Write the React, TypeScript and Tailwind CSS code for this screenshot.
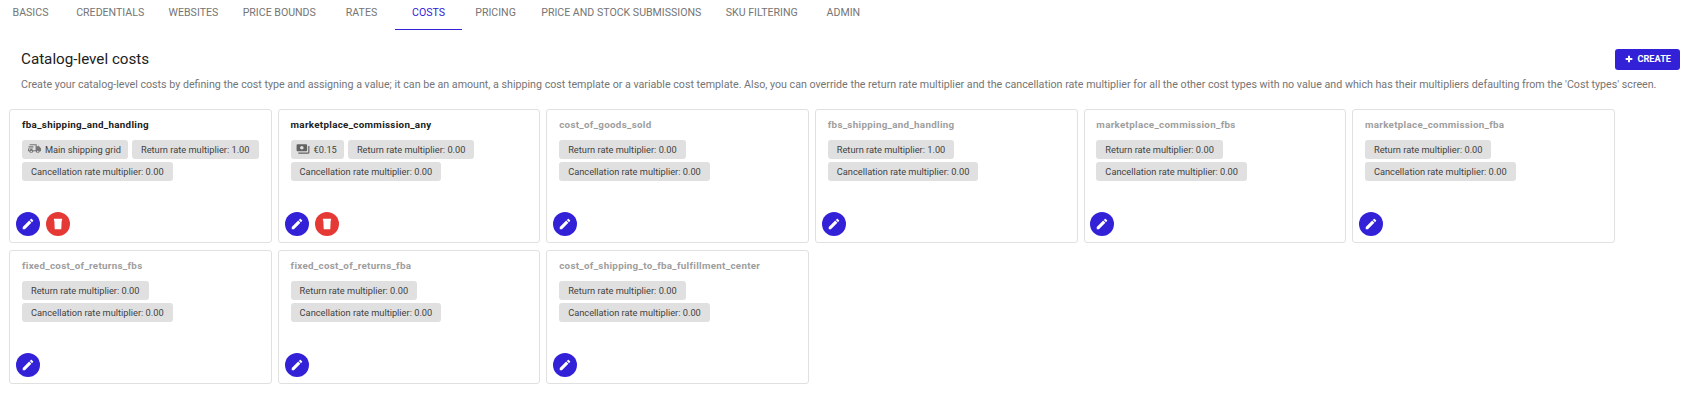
const tabs = [
  "Basics",
  "Credentials",
  "Websites",
  "Price bounds",
  "Rates",
  "Costs",
  "Pricing",
  "Price and stock submissions",
  "SKU filtering",
  "Admin",
];

type Cost = {
  name: string;
  active?: boolean;
  value?: { kind: "truck" | "money"; label: string };
  ret: string;
};

const costs: Cost[] = [
  { name: "fba_shipping_and_handling", active: true, value: { kind: "truck", label: "Main shipping grid" }, ret: "1.00" },
  { name: "marketplace_commission_any", active: true, value: { kind: "money", label: "€0.15" }, ret: "0.00" },
  { name: "cost_of_goods_sold", ret: "0.00" },
  { name: "fbs_shipping_and_handling", ret: "1.00" },
  { name: "marketplace_commission_fbs", ret: "0.00" },
  { name: "marketplace_commission_fba", ret: "0.00" },
  { name: "fixed_cost_of_returns_fbs", ret: "0.00" },
  { name: "fixed_cost_of_returns_fba", ret: "0.00" },
  { name: "cost_of_shipping_to_fba_fulfillment_center", ret: "0.00" },
];

function TruckIcon() {
  return (
    <svg className="w-[13px] h-[13px] -ml-[3px] -translate-y-[1px] text-[#757575]" viewBox="0 0 24 24" fill="currentColor">
      <path d="M19 8h-3V4H3v2h11v9H9.2c-.5-1.2-1.700-2-3.200-2s-2.700.8-3.200 2H2v-3H0v5h2.300c.3 1.700 1.800 3 3.700 3s3.400-1.300 3.700-3h4.600c.3 1.700 1.800 3 3.700 3s3.400-1.300 3.700-3H24v-5l-5-6zM6 19c-.8 0-1.500-.7-1.500-1.500S5.200 16 6 16s1.500.7 1.500 1.500S6.800 19 6 19zm12 0c-.8 0-1.500-.7-1.500-1.500S17.200 16 18 16s1.500.7 1.500 1.500S18.800 19 18 19zM1 8h9v2H1zM2 11h7v1H2z" />
    </svg>
  );
}

function MoneyIcon() {
  return (
    <svg className="w-[14px] h-[14px] -ml-[4px] -translate-y-[1px] text-[#616161]" viewBox="0 0 24 24" fill="currentColor">
      <path d="M19 14V6c0-1.100-.9-2-2-2H3c-1.100 0-2 .9-2 2v8c0 1.100.9 2 2 2h14c1.100 0 2-.9 2-2zm-9-1c-1.660 0-3-1.340-3-3s1.340-3 3-3 3 1.340 3 3-1.340 3-3 3zm13-6v11c0 1.100-.9 2-2 2H4v-2h17V7h2z" />
    </svg>
  );
}

function Chip({ children }: { children: React.ReactNode }) {
  return (
    <div className="flex items-center h-[19px] px-[9px] rounded-[3px] bg-[#e0e0e0] text-[9.25px] text-[#424242] whitespace-nowrap">
      {children}
    </div>
  );
}

function CostCard({ cost }: { cost: Cost }) {
  return (
    <div className="flex flex-col w-[262.600px] h-[134px] rounded-[3px] border border-[#e0e0e0] bg-white pl-[5.7px] pb-[6.500px]">
      <div className={`pl-[6px] pt-[8px] text-[9.800px] font-bold tracking-[0.3px] leading-[14px] ${cost.active ? "text-[#212121]" : "text-[#9e9e9e]"}`}>
        {cost.name}
      </div>
      <div className="flex flex-wrap gap-x-[3.6px] gap-y-[3px] pl-[6px] pt-[8px]">
        {cost.value && (
          <Chip>
            {cost.value.kind === "truck" ? <TruckIcon /> : <MoneyIcon />}
            <span className="ml-[4px] -mr-[1.500px]">{cost.value.label}</span>
          </Chip>
        )}
        <Chip>Return rate multiplier: {cost.ret}</Chip>
        <Chip>Cancellation rate multiplier: 0.00</Chip>
      </div>
      <div className="mt-auto flex gap-[6px]">
        <button className="flex items-center justify-center w-6 h-6 rounded-full bg-[#3321d8] text-white">
          <svg className="w-[14px] h-[14px]" viewBox="0 0 24 24" fill="currentColor">
            <path d="M3 17.250V21h3.750L17.810 9.940l-3.750-3.750L3 17.250zM20.710 7.040c.39-.39.39-1.020 0-1.410l-2.340-2.340c-.39-.39-1.020-.39-1.410 0l-1.830 1.830 3.750 3.750 1.830-1.830z" />
          </svg>
        </button>
        {cost.active && (
          <button className="flex items-center justify-center w-6 h-6 rounded-full bg-[#e53935] text-white">
            <svg className="w-[14px] h-[14px]" viewBox="0 0 24 24" fill="currentColor">
              <path d="M5 3h14v3h-.7L17.600 21H6.400L5.700 6H5z" />
            </svg>
          </button>
        )}
      </div>
    </div>
  );
}

export default function App() {
  return (
    <div className="w-[1692px] h-[405px] overflow-hidden bg-white font-['Roboto',sans-serif]">
      <div className="flex h-[30px] -ml-[3px] text-[10.6px] text-[#757575] uppercase">
        {tabs.map((tab) => (
          <div
            key={tab}
            className={`flex justify-center min-w-[67px] px-[12.2px] pt-[6px] leading-[14px] ${tab === "Costs" ? "text-[#3321d8] border-b border-[#3321d8]" : ""}`}
          >
            {tab}
          </div>
        ))}
      </div>
      <div className="flex items-center justify-between pl-[21px] pr-[12px] pt-[18px]">
        <h1 className="text-[15.2px] leading-[22px] text-[#212121]">Catalog-level costs</h1>
        <button className="flex items-center gap-[4.500px] h-[21px] pl-[9.500px] pr-[9px] rounded-[3px] bg-[#3321d8] text-white text-[9.200px] font-bold uppercase">
          <svg className="w-[8px] h-[8px]" viewBox="0 0 24 24" fill="currentColor">
            <path d="M9 2h6v7h7v6h-7v7H9v-7H2V9h7z" />
          </svg>
          Create
        </button>
      </div>
      <p className="pl-[21px] pt-[7px] text-[10.68px] leading-[16px] text-[#757575] whitespace-nowrap">
        Create your catalog-level costs by defining the cost type and assigning a value; it can be an amount, a shipping cost template or a variable cost template. Also, you can override the return rate multiplier and the cancellation rate multiplier for all the other cost types with no value and which has their multipliers defaulting from the 'Cost types' screen.
      </p>
      <div className="flex flex-wrap gap-x-[6px] gap-y-[7px] pl-[9.3px] pt-[16px]">
        {costs.map((cost) => (
          <CostCard key={cost.name} cost={cost} />
        ))}
      </div>
    </div>
  );
}
